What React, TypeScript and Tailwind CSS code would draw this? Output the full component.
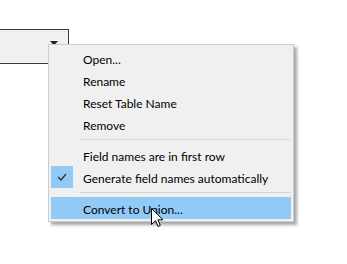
import React from "react";

const Item = ({ label, checked, active }: { label: string; checked?: boolean; active?: boolean }) => (
  <div className={`flex h-[22px] items-center ${active ? "bg-[#91c9f7]" : ""}`}>
    <div className={`flex h-[22px] w-[22px] items-center justify-center ${checked ? "bg-[#91c9f7]" : ""}`}>
      {checked && (
        <svg width="10" height="8" viewBox="0 0 10 8">
          <path d="M1 4 L4 7 L9 1" fill="none" stroke="#333" strokeWidth="1.4" />
        </svg>
      )}
    </div>
    <span className="pl-[10px] pt-[3px] leading-none">{label}</span>
  </div>
);

const Sep = () => (
  <div className="py-[4px] pl-[28px]">
    <div className="h-px bg-[#d7d7d7]" />
  </div>
);

export default function App() {
  return (
    <div
      className="relative h-[264px] w-[347px] overflow-hidden bg-white text-[12px] text-black"
      style={{ fontFamily: 'Lato, "Noto Sans", sans-serif' }}
    >
      <div className="ml-[-10px] mt-[29px] flex h-[35px] w-[79px] items-start justify-end border border-[#3a3a3a] bg-[#f0f0f0] pr-[10px] pt-[11px]">
        <svg width="8" height="5" viewBox="0 0 8 5">
          <path d="M0 0 H8 L4 4.5 Z" fill="#222" />
        </svg>
      </div>

      <div className="absolute left-[48px] top-[44px] w-[246px] border border-[#cccccc] bg-[#f0f0f0] p-[2px] shadow-[3px_3px_3px_rgba(0,0,0,0.35)]">
        <Item label="Open..." />
        <Item label="Rename" />
        <Item label="Reset Table Name" />
        <Item label="Remove" />
        <Sep />
        <Item label="Field names are in first row" />
        <Item label="Generate field names automatically" checked />
        <Sep />
        <Item label="Convert to Union..." active />
      </div>

      <svg className="absolute left-[151px] top-[208px]" width="13" height="20" viewBox="0 0 13 20">
        <path d="M0.5 0.5 L0.5 16.5 L4.5 12.7 L7 18.5 L9.3 17.5 L6.9 11.8 L12 11.8 Z" fill="#fff" stroke="#000" strokeWidth="1" strokeLinejoin="miter" />
      </svg>
    </div>
  );
}
